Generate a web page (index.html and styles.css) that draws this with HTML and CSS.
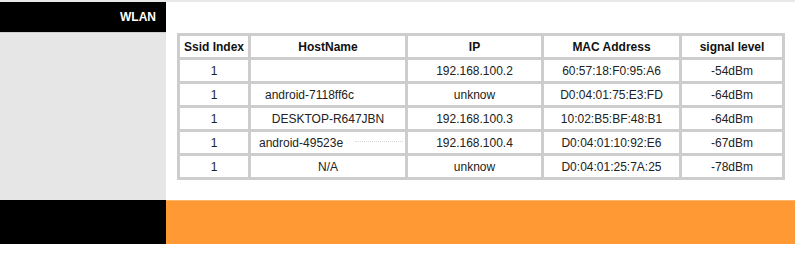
FILE: index.html
```html
<!DOCTYPE html>
<html>
<head>
<meta charset="utf-8">
<title>WLAN</title>
<link rel="stylesheet" href="styles.css">
</head>
<body>
<div class="page">
  <div class="topline"></div>
  <div class="main">
    <div class="side">
      <div class="side-head">WLAN</div>
      <div class="side-panel"></div>
    </div>
    <div class="content">
      <table class="grid">
        <colgroup>
          <col class="c1"><col class="c2"><col class="c3"><col class="c4"><col class="c5">
        </colgroup>
        <thead>
          <tr><th>Ssid Index</th><th>HostName</th><th>IP</th><th>MAC Address</th><th>signal level</th></tr>
        </thead>
        <tbody>
          <tr><td>1</td><td></td><td>192.168.100.2</td><td>60:57:18:F0:95:A6</td><td>-54dBm</td></tr>
          <tr><td>1</td><td class="host host-a">android-7118ff6c</td><td>unknow</td><td>D0:04:01:75:E3:FD</td><td>-64dBm</td></tr>
          <tr><td>1</td><td>DESKTOP-R647JBN</td><td>192.168.100.3</td><td>10:02:B5:BF:48:B1</td><td>-64dBm</td></tr>
          <tr><td>1</td><td class="host host-b">android-49523e<span class="smudge"></span></td><td>192.168.100.4</td><td>D0:04:01:10:92:E6</td><td>-67dBm</td></tr>
          <tr><td>1</td><td>N/A</td><td>unknow</td><td>D0:04:01:25:7A:25</td><td>-78dBm</td></tr>
        </tbody>
      </table>
    </div>
  </div>
  <div class="footer">
    <div class="foot-left"></div>
    <div class="foot-right"></div>
  </div>
</div>
</body>
</html>
```
FILE: styles.css
```css
html, body {
  margin: 0;
  padding: 0;
  background: #ffffff;
}
body {
  font-family: "Liberation Sans", Arial, sans-serif;
  font-size: 12px;
  color: #222;
}
.page {
  width: 795px;
}
.topline {
  height: 2px;
  background: #e8e8e8;
}
.main {
  display: grid;
  grid-template-columns: 166px 1fr;
  height: 198px;
}
.side {
  display: flex;
  flex-direction: column;
}
.side-head {
  height: 31px;
  background: #000;
  color: #fff;
  font-weight: bold;
  font-size: 12px;
  display: flex;
  align-items: center;
  justify-content: flex-end;
  padding-right: 10px;
  border-bottom: 1px solid #cfcfcf;
  box-sizing: border-box;
}
.side-panel {
  flex: 1;
  background: #e6e6e6;
}
.content {
  padding: 31px 0 0 11px;
}
.grid {
  width: 608px;
  table-layout: fixed;
  border-collapse: separate;
  border-spacing: 3px;
  background: #cdcdcd;
}
.c1 { width: 68px; }
.c2 { width: 154px; }
.c3 { width: 133px; }
.c4 { width: 135px; }
.c5 { width: 100px; }
.grid th, .grid td {
  background: #fff;
  height: 21px;
  padding: 0;
  text-align: center;
  white-space: nowrap;
  overflow: hidden;
}
.grid th {
  font-weight: bold;
  color: #111;
}
.grid td.host {
  text-align: left;
}
.grid td.host-a { padding-left: 14px; }
.grid td.host-b { padding-left: 8px; }
.smudge {
  display: inline-block;
  width: 48px;
  height: 6px;
  margin-left: 12px;
  border-top: 1px dotted #d8d8d8;
  vertical-align: top;
  margin-top: 5px;
}
.footer {
  display: grid;
  grid-template-columns: 166px 1fr;
  height: 44px;
}
.foot-left {
  background: #000;
}
.foot-right {
  background: #ff9933;
  border-top: 1px solid #ffb366;
}
```
